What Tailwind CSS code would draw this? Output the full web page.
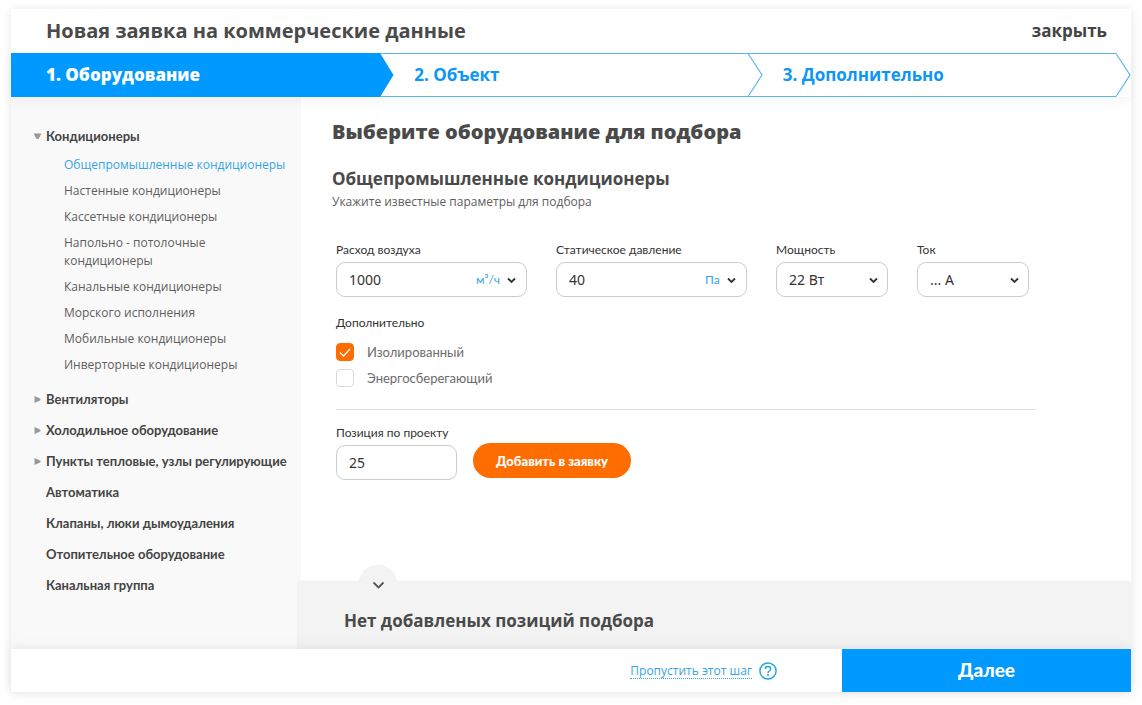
<!DOCTYPE html>
<html lang="ru">
<head>
<meta charset="utf-8">
<meta name="viewport" content="width=device-width, initial-scale=1">
<title>Новая заявка на коммерческие данные</title>
<script src="https://cdn.jsdelivr.net/npm/@tailwindcss/browser@4"></script>
</head>
<body class="flex min-h-screen flex-col bg-white px-[11px] pt-[9px] pb-[13px] font-['Lato','Noto_Sans',sans-serif] text-[#4a4a4a]">
<div class="flex flex-1 flex-col bg-white shadow-[0_1px_10px_rgba(0,0,0,0.10)]">
  <header class="flex h-11 items-center justify-between pr-6 pl-[35px] font-['Open_Sans','Noto_Sans',sans-serif]">
    <h1 class="text-[20px] leading-7 font-bold">Новая заявка на коммерческие данные</h1>
    <button type="button" class="text-[17px] leading-6 font-bold text-[#444]">закрыть</button>
  </header>

  <nav aria-label="Шаги заявки" class="relative z-20 shadow-[0_5px_10px_rgba(0,0,0,0.04)]">
    <ol class="grid h-11 grid-cols-3 pr-[15px] font-['Open_Sans','Noto_Sans',sans-serif] text-[17px] font-bold text-[#0c96f5]">
      <li class="relative flex items-center bg-[#0099ff] pl-[35px] text-white">
        <a href="#equipment" aria-current="step" class="font-extrabold">1. Оборудование</a>
        <svg class="absolute top-0 left-full z-10 h-11 w-[15px]" viewBox="0 0 15 44" aria-hidden="true"><path d="M-1 0H1L14.500 22L1 44H-1Z" fill="#0099ff"/></svg>
      </li>
      <li class="relative flex items-center border-y border-[#5bb7e8] pl-[35px]">
        <a href="#object">2. Объект</a>
        <svg class="absolute -top-px left-full z-10 h-11 w-[15px]" viewBox="0 0 15 44" aria-hidden="true"><path d="M0 .5L14 22L0 43.500" fill="none" stroke="#5bb7e8" stroke-width="1.200"/></svg>
      </li>
      <li class="relative flex items-center border-y border-[#5bb7e8] pl-[35px]">
        <a href="#extra">3. Дополнительно</a>
        <svg class="absolute -top-px left-full z-10 h-11 w-[15px]" viewBox="0 0 15 44" aria-hidden="true"><path d="M0 .5L14 22L0 43.500" fill="none" stroke="#5bb7e8" stroke-width="1.200"/></svg>
      </li>
    </ol>
  </nav>

  <div class="flex flex-1 overflow-hidden">
    <aside class="w-[290px] shrink-0 bg-[#f9f9f9] pt-[30px] pr-4 pl-[35px]">
      <ul class="flex flex-col gap-[13px] text-[13px] leading-[18px] font-bold text-[#444]">
        <li>
          <a href="#ac" class="relative block">
            <svg class="absolute top-[6px] -left-[13px] h-[7px] w-[9px]" viewBox="0 0 9 7" aria-hidden="true"><path d="M.5 .5H8.500L5.500 6H3.500Z" fill="#9a9a9a"/></svg>Кондиционеры</a>
          <ul class="mt-[11px] mb-[3px] flex flex-col gap-2 pl-[18px] font-['Open_Sans','Noto_Sans',sans-serif] text-[12px] font-normal text-[#5e5e5e]">
            <li><a href="#ac-1" class="whitespace-nowrap text-[#35a5e5]">Общепромышленные кондиционеры</a></li>
            <li><a href="#ac-2">Настенные кондиционеры</a></li>
            <li><a href="#ac-3">Кассетные кондиционеры</a></li>
            <li><a href="#ac-4">Напольно - потолочные<br>кондиционеры</a></li>
            <li><a href="#ac-5">Канальные кондиционеры</a></li>
            <li><a href="#ac-6">Морского исполнения</a></li>
            <li><a href="#ac-7">Мобильные кондиционеры</a></li>
            <li><a href="#ac-8">Инверторные кондиционеры</a></li>
          </ul>
        </li>
        <li><a href="#fans" class="relative block"><svg class="absolute top-[6px] -left-3 h-[7px] w-[7px]" viewBox="0 0 7 7" aria-hidden="true"><path d="M.5 0L6.500 2.700V4.300L.5 7Z" fill="#9a9a9a"/></svg>Вентиляторы</a></li>
        <li><a href="#cold" class="relative block"><svg class="absolute top-[6px] -left-3 h-[7px] w-[7px]" viewBox="0 0 7 7" aria-hidden="true"><path d="M.5 0L6.500 2.700V4.300L.5 7Z" fill="#9a9a9a"/></svg>Холодильное оборудование</a></li>
        <li><a href="#heat" class="relative block whitespace-nowrap"><svg class="absolute top-[6px] -left-3 h-[7px] w-[7px]" viewBox="0 0 7 7" aria-hidden="true"><path d="M.5 0L6.500 2.700V4.300L.5 7Z" fill="#9a9a9a"/></svg>Пункты тепловые, узлы регулирующие</a></li>
        <li><a href="#auto">Автоматика</a></li>
        <li><a href="#valves">Клапаны, люки дымоудаления</a></li>
        <li><a href="#heating">Отопительное оборудование</a></li>
        <li><a href="#duct">Канальная группа</a></li>
      </ul>
    </aside>

    <main class="flex min-w-0 flex-1 flex-col">
      <form id="pick" class="flex-1 pt-5 pr-[95px] pb-10 pl-[31px] text-[12px] leading-[18px] text-[#333]">
        <h2 class="font-['Open_Sans','Noto_Sans',sans-serif] text-[20px] leading-[30px] font-extrabold text-[#4a4a4a]">Выберите оборудование для подбора</h2>
        <h3 class="mt-5 font-['Open_Sans','Noto_Sans',sans-serif] text-[17px] leading-6 font-bold text-[#4a4a4a]">Общепромышленные кондиционеры</h3>
        <p class="mt-[2px] font-['Open_Sans','Noto_Sans',sans-serif] text-[#5e5e5e]">Укажите известные параметры для подбора</p>

        <div class="ml-1">
          <div class="mt-[30px] flex flex-wrap gap-[29px]">
            <div class="w-[191px]">
              <label for="flow">Расход воздуха</label>
              <div class="mt-[3px] flex h-[35px] items-center rounded-[9px] border border-[#ccc] px-3">
                <input id="flow" type="text" value="1000" class="min-w-0 flex-1 font-['Noto_Sans',sans-serif] text-[14px] outline-none">
                <div class="relative">
                  <select aria-label="Единица расхода воздуха" class="block appearance-none pr-[14px] text-[12px] text-[#35a5e5] outline-none"><option>м³/ч</option></select>
                  <svg class="pointer-events-none absolute top-1/2 right-0 -mt-[3px] mr-[-3px] h-[7px] w-[11px]" viewBox="0 0 11 7" aria-hidden="true"><path d="M2 1.500L5.500 5L9 1.500" fill="none" stroke="#333" stroke-width="1.800"/></svg>
                </div>
              </div>
            </div>
            <div class="w-[191px]">
              <label for="pressure">Статическое давление</label>
              <div class="mt-[3px] flex h-[35px] items-center rounded-[9px] border border-[#ccc] px-3">
                <input id="pressure" type="text" value="40" class="min-w-0 flex-1 font-['Noto_Sans',sans-serif] text-[14px] outline-none">
                <div class="relative">
                  <select aria-label="Единица давления" class="block appearance-none pr-[14px] text-[12px] text-[#35a5e5] outline-none"><option>Па</option></select>
                  <svg class="pointer-events-none absolute top-1/2 right-0 -mt-[3px] mr-[-3px] h-[7px] w-[11px]" viewBox="0 0 11 7" aria-hidden="true"><path d="M2 1.500L5.500 5L9 1.500" fill="none" stroke="#333" stroke-width="1.800"/></svg>
                </div>
              </div>
            </div>
            <div class="w-28">
              <label for="power">Мощность</label>
              <div class="relative mt-[3px]">
                <select id="power" class="h-[35px] w-full appearance-none rounded-[9px] border border-[#ccc] px-3 font-['Noto_Sans',sans-serif] text-[14px] outline-none"><option>22 Вт</option></select>
                <svg class="pointer-events-none absolute top-[15px] right-[9px] h-[7px] w-[11px]" viewBox="0 0 11 7" aria-hidden="true"><path d="M2 1.500L5.500 5L9 1.500" fill="none" stroke="#333" stroke-width="1.800"/></svg>
              </div>
            </div>
            <div class="w-28">
              <label for="current">Ток</label>
              <div class="relative mt-[3px]">
                <select id="current" class="h-[35px] w-full appearance-none rounded-[9px] border border-[#ccc] px-3 font-['Noto_Sans',sans-serif] text-[14px] outline-none"><option>... А</option></select>
                <svg class="pointer-events-none absolute top-[15px] right-[9px] h-[7px] w-[11px]" viewBox="0 0 11 7" aria-hidden="true"><path d="M2 1.500L5.500 5L9 1.500" fill="none" stroke="#333" stroke-width="1.800"/></svg>
              </div>
            </div>
          </div>

          <fieldset class="mt-[17px] flex flex-col">
            <legend>Дополнительно</legend>
            <label class="mt-[11px] flex items-center gap-[13px] self-start text-[13px] text-[#6b6b6b]">
              <span class="relative size-[18px]">
                <input type="checkbox" checked class="peer block size-[18px] appearance-none rounded-[4px] border border-[#d8d8d8] bg-white checked:border-[#ff6d00] checked:bg-[#ff6d00]">
                <svg class="pointer-events-none absolute inset-0 hidden size-[18px] peer-checked:block" viewBox="0 0 18 18" aria-hidden="true"><path d="M4 9.500L7.500 13L14 6" fill="none" stroke="#fff" stroke-width="1.300"/></svg>
              </span>
              Изолированный
            </label>
            <label class="mt-2 flex items-center gap-[13px] self-start text-[13px] text-[#6b6b6b]">
              <span class="relative size-[18px]">
                <input type="checkbox" class="peer block size-[18px] appearance-none rounded-[4px] border border-[#d8d8d8] bg-white checked:border-[#ff6d00] checked:bg-[#ff6d00]">
                <svg class="pointer-events-none absolute inset-0 hidden size-[18px] peer-checked:block" viewBox="0 0 18 18" aria-hidden="true"><path d="M4 9.500L7.500 13L14 6" fill="none" stroke="#fff" stroke-width="1.300"/></svg>
              </span>
              Энергосберегающий
            </label>
          </fieldset>

          <hr class="mt-[22px] border-[#e2e2e2]">

          <div class="mt-[14px] flex items-end gap-4">
            <div class="w-[121px]">
              <label for="position" class="whitespace-nowrap">Позиция по проекту</label>
              <input id="position" type="text" value="25" class="mt-[3px] block h-[35px] w-full rounded-[9px] border border-[#ccc] px-3 font-['Noto_Sans',sans-serif] text-[14px] outline-none">
            </div>
            <button type="submit" class="mb-[2px] h-[35px] w-[158px] rounded-full bg-[#ff6d00] text-[13px] font-black text-white">Добавить в заявку</button>
          </div>
        </div>
      </form>

      <section class="relative z-10 -ml-[2px] bg-[#f3f3f3] pt-[25px] pb-[14px] pl-[45px] shadow-[0_0_3px_rgba(0,0,0,0.12)]">
        <button type="button" aria-label="Свернуть список позиций" class="absolute -top-4 left-[61px] h-9 w-9 rounded-full bg-[#f3f3f3] shadow-[0_0_3px_rgba(0,0,0,0.12)] [clip-path:inset(-4px_-4px_20px_-4px)]"></button>
        <svg class="pointer-events-none absolute -top-[2px] left-[73px] h-[10px] w-[13px]" viewBox="0 0 13 10" aria-hidden="true"><path d="M1.500 2.500L6.500 7.500L11.500 2.500" fill="none" stroke="#555" stroke-width="1.800"/></svg>
        <h2 class="font-['Open_Sans','Noto_Sans',sans-serif] text-[17px] leading-7 font-bold">Нет добавленых позиций подбора</h2>
      </section>
    </main>
  </div>

  <footer class="relative z-20 flex h-[43px] items-stretch bg-white shadow-[0_-3px_10px_rgba(0,0,0,0.06)]">
    <div class="flex flex-1 items-center justify-end gap-[7px] pr-[65px]">
      <a href="#skip" class="border-b border-dotted border-[#35a5e5] font-['Open_Sans','Noto_Sans',sans-serif] text-[12px] leading-[15px] text-[#35a5e5]">Пропустить этот шаг</a>
      <button type="button" aria-label="Справка">
        <svg class="block size-[18px]" viewBox="0 0 18 18" aria-hidden="true"><circle cx="9" cy="9" r="8.100" fill="none" stroke="#25a5e2" stroke-width="1.500"/><path d="M6.300 7C6.300 3.500 11.700 3.500 11.700 7C11.700 9 9 9 9 11" fill="none" stroke="#25a5e2" stroke-width="1.500"/><circle cx="9" cy="13.100" r="1" fill="#25a5e2"/></svg>
      </button>
    </div>
    <button type="submit" form="pick" class="w-[289px] bg-[#0099ff] text-[19px] font-black text-white">Далее</button>
  </footer>
</div>
</body>
</html>
